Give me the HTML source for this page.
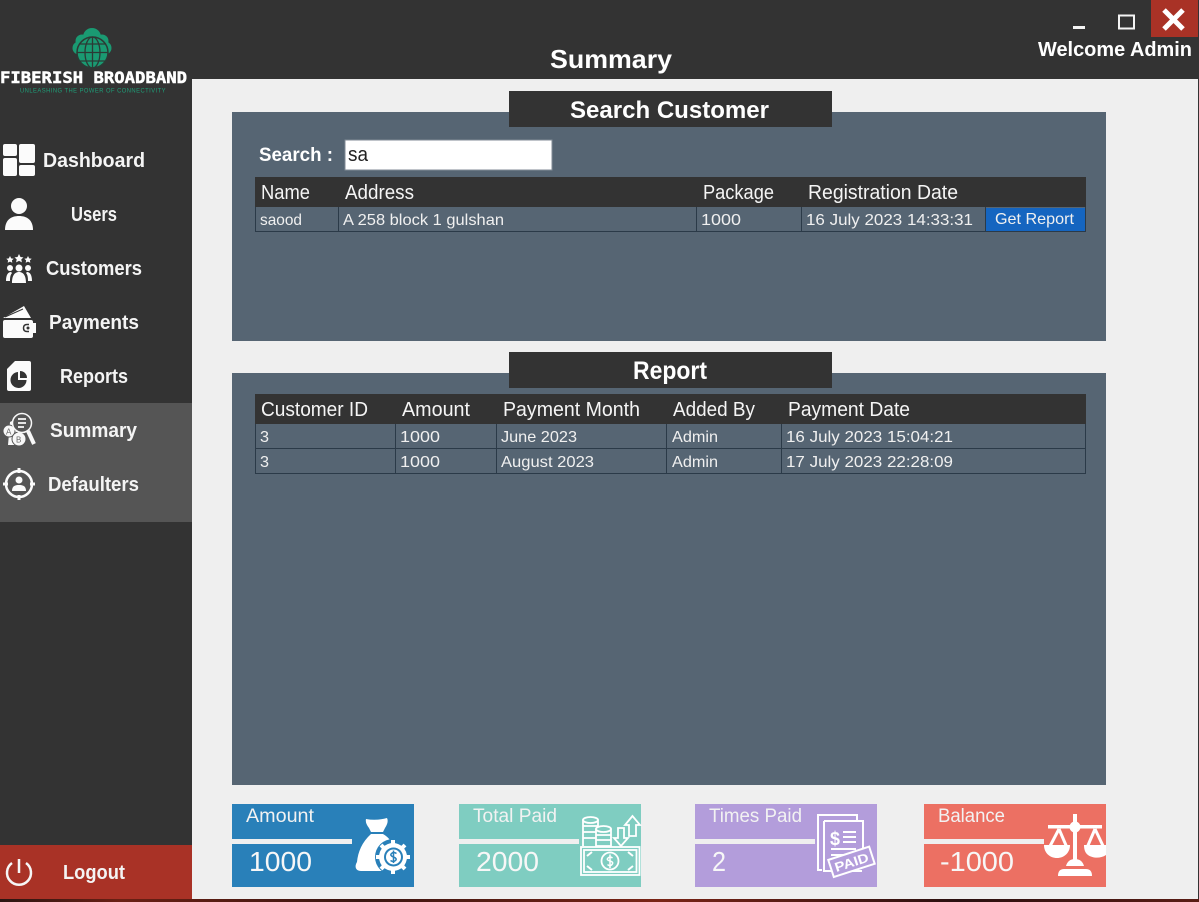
<!DOCTYPE html>
<html><head><meta charset="utf-8"><title>Summary</title>
<style>
html,body{margin:0;padding:0;background:#333;width:1199px;height:902px;overflow:hidden}
svg{display:block}
text{font-family:"Liberation Sans",sans-serif;fill:#fff}
.b{font-weight:bold}
.nav{font-size:20px;font-weight:bold;fill:#f4f4f4}
.th{font-size:20px;fill:#f5f5f5}
.td{font-size:16px;fill:#f0f0f0}
.cl{font-size:19px;fill:#f2f2f2}
.cv{font-size:28px;fill:#f7f7f7}
</style></head><body>
<svg width="1199" height="902" viewBox="0 0 1199 902" xmlns="http://www.w3.org/2000/svg">
<defs><linearGradient id="st" x1="0" x2="1" y1="0" y2="0"><stop offset="0" stop-color="#2a1512"/><stop offset=".1" stop-color="#6a2014"/><stop offset=".3" stop-color="#3a1510"/><stop offset=".55" stop-color="#7a2416"/><stop offset=".8" stop-color="#2a1010"/><stop offset="1" stop-color="#5a1c14"/></linearGradient></defs>
<rect width="1199" height="902" fill="#333"/>
<rect x="0" y="899" width="1199" height="3" fill="url(#st)"/>
<rect x="192" y="79" width="1006" height="820" fill="#efefef"/>
<rect x="0" y="403" width="192" height="119" fill="#555"/>
<rect x="0" y="845" width="192" height="54" fill="#a93226"/>

<!-- logo -->
<g fill="#1a9a72"><circle cx="92" cy="37" r="9"/><circle cx="82" cy="41" r="6.500"/><circle cx="102" cy="41" r="6.500"/><circle cx="79" cy="48" r="6.500"/><circle cx="105" cy="48" r="6.500"/><circle cx="92.500" cy="52.500" r="15.500" stroke="#2c3a35" stroke-width="1.500"/></g>
<g fill="none" stroke="#2c3a35" stroke-width="1.300"><ellipse cx="92.500" cy="52.500" rx="7.500" ry="15.500"/><path d="M92.500 37V68M77 52.500H108M80 44H105M80 61H105"/></g>
<text x="0" y="83" font-size="16" class="b" textLength="187" lengthAdjust="spacingAndGlyphs" style="font-family:'DejaVu Sans Mono',monospace;stroke:#fff;stroke-width:.5">FIBERISH BROADBAND</text>
<text x="20" y="92.500" font-size="6.500" textLength="146" lengthAdjust="spacingAndGlyphs" style="fill:#1f9e78;letter-spacing:.5px">UNLEASHING THE POWER OF CONNECTIVITY</text>

<!-- title bar -->
<text x="550" y="68" font-size="26" class="b" textLength="122" lengthAdjust="spacingAndGlyphs">Summary</text>
<text x="1038" y="56" font-size="20" class="b" textLength="154" lengthAdjust="spacingAndGlyphs">Welcome Admin</text>
<rect x="1151" y="0" width="47" height="37" fill="#a93226"/>
<path d="M1164 10L1183 29M1183 10L1164 29" stroke="#fff" stroke-width="5"/>
<rect x="1073" y="26" width="12" height="3" fill="#f4f4f4"/>
<rect x="1119" y="15.500" width="15" height="13" fill="none" stroke="#f4f4f4" stroke-width="2"/>

<!-- nav text -->
<text class="nav" x="43" y="167" textLength="102" lengthAdjust="spacingAndGlyphs">Dashboard</text>
<text class="nav" x="71" y="221" textLength="46" lengthAdjust="spacingAndGlyphs">Users</text>
<text class="nav" x="46" y="275" textLength="96" lengthAdjust="spacingAndGlyphs">Customers</text>
<text class="nav" x="49" y="329" textLength="90" lengthAdjust="spacingAndGlyphs">Payments</text>
<text class="nav" x="60" y="383" textLength="68" lengthAdjust="spacingAndGlyphs">Reports</text>
<text class="nav" x="50" y="437" textLength="87" lengthAdjust="spacingAndGlyphs">Summary</text>
<text class="nav" x="48" y="491" textLength="91" lengthAdjust="spacingAndGlyphs">Defaulters</text>
<text class="nav" x="63" y="879" textLength="62" lengthAdjust="spacingAndGlyphs">Logout</text>

<!-- nav icons -->
<g fill="#fbfbfb">
<rect x="3" y="144" width="14" height="12" rx="2"/><rect x="3" y="158" width="14" height="18" rx="2"/><rect x="19" y="144" width="16" height="19" rx="2"/><rect x="19" y="165" width="16" height="11" rx="2"/>
<circle cx="19" cy="206" r="8"/><path d="M5 230C5 220 11 216 19 216S33 220 33 230Z"/>
<path d="M19 254l1.500 3 3 .4-2.200 2 .6 3-2.900-1.500-2.900 1.500.6-3-2.200-2 3-.4zM10 256l1.200 2.400 2.500.3-1.800 1.700.4 2.400-2.300-1.200-2.300 1.200.4-2.400-1.800-1.700 2.500-.3zM28 256l1.200 2.400 2.500.3-1.800 1.700.4 2.400-2.300-1.200-2.300 1.200.4-2.400-1.800-1.700 2.500-.3z"/>
<circle cx="19" cy="268" r="3.500"/><circle cx="10" cy="268" r="3"/><circle cx="28" cy="268" r="3"/>
<path d="M12 283C12 275 15 272 19 272S26 275 26 283ZM6 281C6 275 8 272 11 272L12 273C10 275 10 279 10 281ZM32 281C32 275 30 272 27 272L26 273C28 275 28 279 28 281Z"/>
<path d="M3 318L24 306L31 318ZM5 320H31Q33 320 33 322V336Q33 338 31 338H5Q3 338 3 336V322Q3 320 5 320Z"/>
<path d="M27 323H36V333H27Q22 333 22 328T27 323Z" fill="#fbfbfb"/>
<path d="M5 317L23 309" stroke="#333" stroke-width="1" fill="none"/>
<path d="M29 324.500H27Q23.500 324.500 23.500 328T27 331.500H29" stroke="#333" stroke-width="1.500" fill="none"/>
<circle cx="28" cy="328" r="1.500" fill="#333"/>
<path d="M15 361H29Q31 361 31 363V389Q31 391 29 391H9Q7 391 7 389V369Z"/>
</g>
<path d="M18 372A8 8 0 1 0 26.500 380H18Z" fill="#333"/><path d="M20 371A7 7 0 0 1 27 378H20Z" fill="#333"/>
<!-- summary icon -->
<g fill="#f8f8f8"><path d="M10 422L16 419V424H20V436L23 445H8Z"/><circle cx="9" cy="431" r="6" stroke="#555"/><circle cx="19" cy="439" r="7" stroke="#555"/></g>
<text x="6" y="434.500" font-size="8" style="fill:#666">A</text><text x="16" y="442.500" font-size="8" style="fill:#666">B</text>
<circle cx="22" cy="423" r="9.500" fill="#555" stroke="#f8f8f8" stroke-width="1.500"/><path d="M18 419H26M18 423H26M18 427H24" stroke="#f8f8f8" stroke-width="1.800"/>
<path d="M28 431L34 444" stroke="#f8f8f8" stroke-width="4"/>
<!-- defaulters -->
<circle cx="19" cy="484" r="13" fill="none" stroke="#fbfbfb" stroke-width="2.500"/>
<path d="M19 468V473M19 495V500M3 484H8M30 484H35" stroke="#fbfbfb" stroke-width="3"/>
<circle cx="19" cy="480" r="3.500" fill="#fbfbfb"/><path d="M12 491C12 486 15 485 19 485S26 486 26 491Z" fill="#fbfbfb"/>
<!-- power -->
<path d="M12 863A12 12 0 1 0 26 863" fill="none" stroke="#f6f6f6" stroke-width="2.500"/><path d="M19 859V873" stroke="#f6f6f6" stroke-width="2.500"/>

<!-- search panel -->
<rect x="232" y="112" width="874" height="229" fill="#566573"/>
<rect x="509" y="91" width="323" height="36" fill="#333"/>
<text x="570" y="118" font-size="24" class="b" textLength="199" lengthAdjust="spacingAndGlyphs">Search Customer</text>
<text x="259" y="161" font-size="19" class="b" textLength="74" lengthAdjust="spacingAndGlyphs">Search :</text>
<rect x="345" y="140" width="207" height="30" fill="#fff" stroke="#808a94" stroke-width="1"/>
<text x="348" y="161" font-size="20" style="fill:#222" textLength="20" lengthAdjust="spacingAndGlyphs">sa</text>
<rect x="255" y="177" width="831" height="30" fill="#333"/>
<text class="th" x="261" y="199" textLength="49" lengthAdjust="spacingAndGlyphs">Name</text>
<text class="th" x="345" y="199" textLength="69" lengthAdjust="spacingAndGlyphs">Address</text>
<text class="th" x="703" y="199" textLength="71" lengthAdjust="spacingAndGlyphs">Package</text>
<text class="th" x="808" y="199" textLength="150" lengthAdjust="spacingAndGlyphs">Registration Date</text>
<path d="M255.500 207V232M338.500 207V232M696.500 207V232M801.500 207V232M985.500 207V232M1085.500 207V232M255 231.500H1086" stroke="#2b3a48" stroke-width="1" fill="none"/>
<rect x="986" y="208" width="99" height="23" fill="#1565c0"/>
<text class="td" x="260" y="225" textLength="42" lengthAdjust="spacingAndGlyphs">saood</text>
<text class="td" x="343" y="225" textLength="161" lengthAdjust="spacingAndGlyphs">A 258 block 1 gulshan</text>
<text class="td" x="701" y="225" textLength="40" lengthAdjust="spacingAndGlyphs">1000</text>
<text class="td" x="806" y="225" textLength="167" lengthAdjust="spacingAndGlyphs">16 July 2023 14:33:31</text>
<text class="td" x="995" y="224" textLength="79" lengthAdjust="spacingAndGlyphs">Get Report</text>

<!-- report panel -->
<rect x="232" y="373" width="874" height="412" fill="#566573"/>
<rect x="509" y="352" width="323" height="36" fill="#333"/>
<text x="633" y="379" font-size="25" class="b" textLength="74" lengthAdjust="spacingAndGlyphs">Report</text>
<rect x="255" y="394" width="831" height="30" fill="#333"/>
<text class="th" x="261" y="416" textLength="107" lengthAdjust="spacingAndGlyphs">Customer ID</text>
<text class="th" x="402" y="416" textLength="68" lengthAdjust="spacingAndGlyphs">Amount</text>
<text class="th" x="503" y="416" textLength="137" lengthAdjust="spacingAndGlyphs">Payment Month</text>
<text class="th" x="673" y="416" textLength="82" lengthAdjust="spacingAndGlyphs">Added By</text>
<text class="th" x="788" y="416" textLength="122" lengthAdjust="spacingAndGlyphs">Payment Date</text>
<path d="M255.500 424V474M395.500 424V474M496.500 424V474M666.500 424V474M781.500 424V474M1085.500 424V474M255 448.500H1086M255 473.500H1086" stroke="#2b3a48" stroke-width="1" fill="none"/>
<text class="td" x="260" y="442" textLength="9" lengthAdjust="spacingAndGlyphs">3</text>
<text class="td" x="400" y="442" textLength="40" lengthAdjust="spacingAndGlyphs">1000</text>
<text class="td" x="501" y="442" textLength="76" lengthAdjust="spacingAndGlyphs">June 2023</text>
<text class="td" x="672" y="442" textLength="46" lengthAdjust="spacingAndGlyphs">Admin</text>
<text class="td" x="786" y="442" textLength="167" lengthAdjust="spacingAndGlyphs">16 July 2023 15:04:21</text>
<text class="td" x="260" y="467" textLength="9" lengthAdjust="spacingAndGlyphs">3</text>
<text class="td" x="400" y="467" textLength="40" lengthAdjust="spacingAndGlyphs">1000</text>
<text class="td" x="501" y="467" textLength="93" lengthAdjust="spacingAndGlyphs">August 2023</text>
<text class="td" x="672" y="467" textLength="46" lengthAdjust="spacingAndGlyphs">Admin</text>
<text class="td" x="786" y="467" textLength="167" lengthAdjust="spacingAndGlyphs">17 July 2023 22:28:09</text>

<!-- cards -->
<rect x="232" y="804" width="182" height="83" fill="#2980b9"/><rect x="232" y="839" width="120" height="5" fill="#efefef"/>
<rect x="459" y="804" width="182" height="83" fill="#7fcdc1"/><rect x="459" y="839" width="120" height="5" fill="#efefef"/>
<rect x="695" y="804" width="182" height="83" fill="#b39ddb"/><rect x="695" y="839" width="120" height="5" fill="#efefef"/>
<rect x="924" y="804" width="182" height="83" fill="#ec7063"/><rect x="924" y="839" width="120" height="5" fill="#efefef"/>
<text class="cl" x="246" y="822" textLength="68" lengthAdjust="spacingAndGlyphs">Amount</text>
<text class="cv" x="249" y="871" textLength="63" lengthAdjust="spacingAndGlyphs">1000</text>
<text class="cl" x="473" y="822" textLength="84" lengthAdjust="spacingAndGlyphs">Total Paid</text>
<text class="cv" x="476" y="871" textLength="63" lengthAdjust="spacingAndGlyphs">2000</text>
<text class="cl" x="709" y="822" textLength="93" lengthAdjust="spacingAndGlyphs">Times Paid</text>
<text class="cv" x="712" y="871" textLength="14" lengthAdjust="spacingAndGlyphs">2</text>
<text class="cl" x="938" y="822" textLength="67" lengthAdjust="spacingAndGlyphs">Balance</text>
<text class="cv" x="940" y="871" textLength="74" lengthAdjust="spacingAndGlyphs">-1000</text>

<!-- money bag -->
<path d="M366 819Q376 821 387 818Q389 822 385 828L383 832H371L369 828Q365 823 366 819ZM371 834H383C393 840 397 850 397 860L392 871H361C356 871 354 867 357 862C358 852 362 842 371 834Z" fill="#fff"/>
<circle cx="393" cy="857" r="18" fill="#2980b9"/>
<g stroke="#fff" stroke-width="4"><path d="M393 840V874M376 857H410M381 845L405 869M405 845L381 869"/></g>
<circle cx="393" cy="857" r="14" fill="#fff"/>
<circle cx="393.500" cy="857" r="9.500" fill="#2980b9"/><circle cx="393.500" cy="857" r="7.500" fill="#fff"/>
<path d="M396.500 853.500Q393.500 851.500 391.500 853.500T393.500 857T395.500 860.500T390.500 860.500M393.500 850.500V863" stroke="#2980b9" stroke-width="1.500" fill="none"/>

<!-- money stack -->
<g fill="#7fcdc1" stroke="#fff" stroke-width="1.800">
<rect x="581" y="847" width="58.500" height="28"/><rect x="584" y="850" width="52.500" height="22"/>
<circle cx="610" cy="861" r="8.500"/>
<path d="M583 846V820Q590 815 598 820V846M583 826H598M583 832H598M583 838H598"/>
<ellipse cx="590.500" cy="820" rx="7.500" ry="3"/>
<path d="M596 846V829Q603 825 611 829V846ZM596 835H611M596 840H611"/>
<ellipse cx="603.500" cy="829" rx="7.500" ry="3"/>
<path d="M621 846L614 838H618V828H624V838H628Z"/>
<path d="M632.500 816L625 825H629V836H636V825H640Z"/>
</g>
<path d="M612.500 858Q610 856 608 858T610 861T612 864.500T607.500 864.500M610 854.500V868" stroke="#fff" stroke-width="1.500" fill="none"/>
<path d="M587 856L592 852M587 866L592 870M633 856L628 852M633 866L628 870" stroke="#fff" stroke-width="2" fill="none"/>

<!-- paid doc -->
<g fill="none" stroke="#fff" stroke-width="2">
<path d="M822 870H818V815H857V821"/>
<path d="M824 821H863V851M862 871H824V821"/>
</g>
<text x="830" y="845" font-size="19" class="b" textLength="10" lengthAdjust="spacingAndGlyphs">$</text>
<path d="M843 832H856M843 837H856M843 842H856M831 849H856M831 855H847" stroke="#fff" stroke-width="2" fill="none"/>
<g transform="rotate(-18 851 862)"><rect x="830" y="853" width="43" height="18" fill="#b39ddb" stroke="#fff" stroke-width="2"/><text x="834" y="867" font-size="13" class="b" textLength="35" lengthAdjust="spacingAndGlyphs">PAID</text></g>

<!-- scale -->
<rect x="1073" y="814" width="4" height="52" fill="#fff"/>
<rect x="1048" y="825" width="54" height="3.500" fill="#fff"/>
<circle cx="1075" cy="827" r="5.500" fill="#fff"/>
<path d="M1059 829L1048 850M1059 829L1068 850M1095 829L1086 850M1095 829L1105 850" stroke="#fff" stroke-width="3" fill="none"/>
<path d="M1044 845H1070C1070 853 1064 858 1057 858S1044 853 1044 845ZM1084 845H1106V855C1100 859 1092 858 1088 855C1085 853 1084 849 1084 845Z" fill="#fff"/>
<path d="M1066 866Q1068 859 1075 859T1084 866ZM1058 876Q1058 869 1064 869H1086Q1092 869 1092 876Z" fill="#fff"/>
</svg>
</body></html>
